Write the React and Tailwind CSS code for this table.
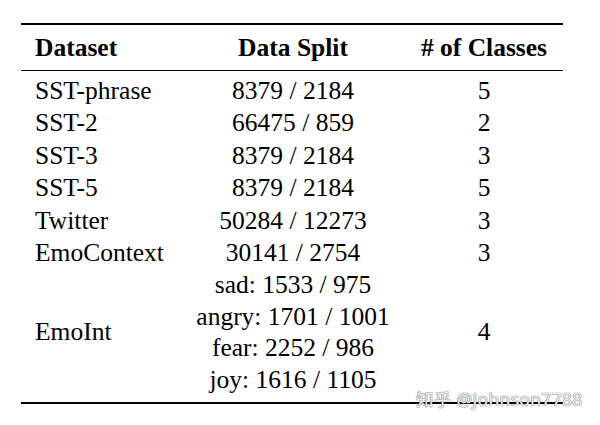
const rows = [
  ["SST-phrase", "8379 / 2184", "5"],
  ["SST-2", "66475 / 859", "2"],
  ["SST-3", "8379 / 2184", "3"],
  ["SST-5", "8379 / 2184", "5"],
  ["Twitter", "50284 / 12273", "3"],
  ["EmoContext", "30141 / 2754", "3"],
];

const emoInt = ["sad: 1533 / 975", "angry: 1701 / 1001", "fear: 2252 / 986", "joy: 1616 / 1105"];

const cols = "grid grid-cols-[170px_204px_178px]";

export default function App() {
  return (
    <div className="relative h-[425px] w-[600px] overflow-hidden bg-white font-['Liberation_Serif','Times_New_Roman',serif] text-[25.5px] leading-[32.4px] text-black">
      <div className="ml-[21px] w-[542px] pt-[23px]">
        <div className="h-[2px] bg-black" />
        <div className={`${cols} pt-[7px] pb-[5.4px] font-bold`}>
          <div className="pl-[14px]">Dataset</div>
          <div className="text-center">Data Split</div>
          <div className="text-center"># of Classes</div>
        </div>
        <div className="h-[1px] bg-black" />
        <div className="pt-[4.2px] pb-[6.4px]">
          {rows.map(([name, split, classes]) => (
            <div key={name} className={cols}>
              <div className="pl-[14px]">{name}</div>
              <div className="text-center">{split}</div>
              <div className="text-center">{classes}</div>
            </div>
          ))}
          <div className={`${cols} items-center`}>
            <div className="pl-[14px]">EmoInt</div>
            <div className="flex flex-col items-center leading-[31.5px]">
              {emoInt.map(line => <div key={line}>{line}</div>)}
            </div>
            <div className="text-center">4</div>
          </div>
        </div>
        <div className="h-[2px] bg-black" />
      </div>
      <div className="absolute left-[416px] top-[387px] whitespace-nowrap font-['Noto_Sans','Noto_Sans_CJK_SC',sans-serif] text-[17.5px] leading-[24px] tracking-[0.3px] text-[#ececec] [text-shadow:0_0_1px_#6b6b6b,0_0_1px_#6b6b6b]">
        知乎 @Johnson7788
      </div>
    </div>
  );
}
